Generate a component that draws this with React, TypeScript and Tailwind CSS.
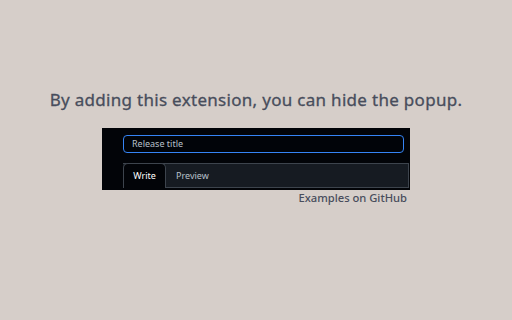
export default function App() {
  return (
    <div
      className="flex h-[320px] w-[512px] flex-col items-center bg-[#d6cec9]"
      style={{ fontFamily: '"Noto Sans", sans-serif' }}
    >
      <h1 className="mt-[86px] text-[17px] font-normal leading-[28px] tracking-[0.3px] text-[#484d5c] [-webkit-text-stroke:0.3px_#484d5c]">
        By adding this extension, you can hide the popup.
      </h1>
      <div className="mt-[14px] w-[308px] self-start ml-[102px]">
        <div className="h-[62px] overflow-hidden bg-[#020408] pl-[21px] pr-px pt-[7px]">
          <div className="mr-[5px] flex h-[18px] items-center rounded-[4px] border-[1.5px] border-[#3584f5] bg-[#010409] px-2 text-[9px] text-[#b8c0c9]">
            Release title
          </div>
          <div className="mt-[10px] flex h-[25px] border border-l-0 border-[#3d444d] bg-[#161b22] text-[9px]">
            <div className="-mt-px flex h-[25px] w-[43px] items-center justify-center rounded-t-[5px] border border-b-0 border-[#3d444d] bg-[#020408] text-white">
              Write
            </div>
            <div className="flex items-center px-[10px] text-[#b8c0c9]">Preview</div>
          </div>
        </div>
        <div className="mt-[1px] pr-[3px] text-right text-[11.2px] font-medium leading-[14px] text-[#484d5c]">
          Examples on GitHub
        </div>
      </div>
    </div>
  );
}
